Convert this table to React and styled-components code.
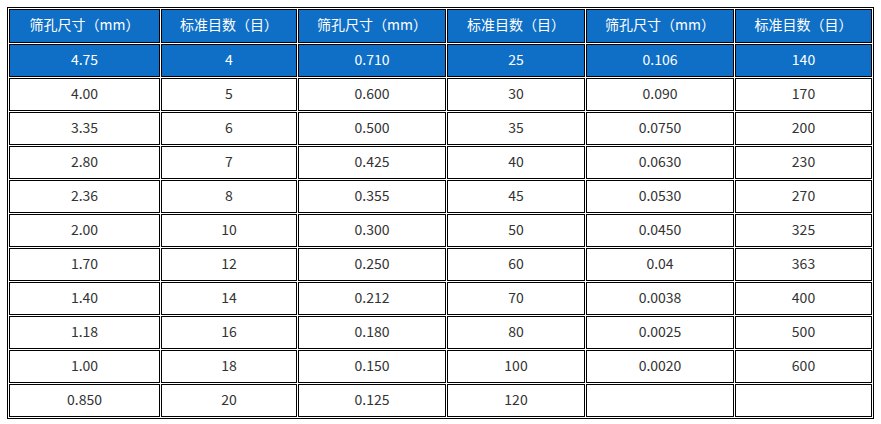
import styled, { createGlobalStyle } from "styled-components";

const GlobalStyle = createGlobalStyle`
  body {
    margin: 0;
    background: #fff;
    font-family: "Microsoft YaHei", "Noto Sans CJK SC", "Noto Sans", sans-serif;
  }
`;

const Table = styled.table`
  margin: 7px 0 0 7px;
  border: 1px solid #000;
  border-spacing: 1px;
  border-collapse: separate;
  table-layout: fixed;
  font-size: 14px;
  color: #333;
`;

const Cell = styled.td`
  box-sizing: border-box;
  border: 1px solid #000;
  padding: 0 0 4px;
  text-align: center;
  vertical-align: middle;
  height: ${(p) => (p.$head ? 34 : 33)}px;
  background: ${(p) => (p.$blue ? "#0f6fc6" : "#fff")};
  color: ${(p) => (p.$blue ? "#fff" : "#333")};
  line-height: 1;
`;

const widths = [151, 136, 148, 138, 148, 137];

const header = [
  "筛孔尺寸（mm）",
  "标准目数（目）",
  "筛孔尺寸（mm）",
  "标准目数（目）",
  "筛孔尺寸（mm）",
  "标准目数（目）",
];

const rows = [
  ["4.75", "4", "0.710", "25", "0.106", "140"],
  ["4.00", "5", "0.600", "30", "0.090", "170"],
  ["3.35", "6", "0.500", "35", "0.0750", "200"],
  ["2.80", "7", "0.425", "40", "0.0630", "230"],
  ["2.36", "8", "0.355", "45", "0.0530", "270"],
  ["2.00", "10", "0.300", "50", "0.0450", "325"],
  ["1.70", "12", "0.250", "60", "0.04", "363"],
  ["1.40", "14", "0.212", "70", "0.0038", "400"],
  ["1.18", "16", "0.180", "80", "0.0025", "500"],
  ["1.00", "18", "0.150", "100", "0.0020", "600"],
  ["0.850", "20", "0.125", "120", "", ""],
];

export default function App() {
  return (
    <>
      <GlobalStyle />
      <Table>
        <colgroup>
          {widths.map((w, i) => (
            <col key={i} style={{ width: w }} />
          ))}
        </colgroup>
        <tbody>
          <tr>
            {header.map((h, i) => (
              <Cell key={i} $head $blue>
                {h}
              </Cell>
            ))}
          </tr>
          {rows.map((r, ri) => (
            <tr key={ri}>
              {r.map((v, ci) => (
                <Cell key={ci} $blue={ri === 0}>
                  {v}
                </Cell>
              ))}
            </tr>
          ))}
        </tbody>
      </Table>
    </>
  );
}
